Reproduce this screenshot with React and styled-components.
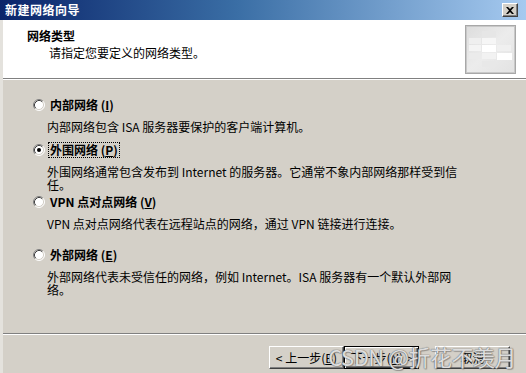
import React from "react";
import styled, { createGlobalStyle } from "styled-components";

const GlobalStyle = createGlobalStyle`
  html, body {
    margin: 0;
    padding: 0;
    background: #d4d0c8;
  }
  body {
    font-family: "Noto Sans CJK SC", "Liberation Sans", sans-serif;
    font-size: 12px;
    color: #000;
  }
`;

const Window = styled.div`
  position: relative;
  width: 526px;
  height: 373px;
  display: flex;
  flex-direction: column;
  overflow: hidden;
  background: #d4d0c8;
`;

const TitleBar = styled.div`
  height: 20px;
  flex-shrink: 0;
  display: flex;
  align-items: center;
  justify-content: space-between;
  padding: 0 8px 0 5px;
  background: linear-gradient(to right, #0a246a 0%, #3a6ea5 45%, #a6caf0 100%);
`;

const Title = styled.span`
  color: #fff;
  font-weight: bold;
  font-size: 12px;
  line-height: 14px;
  letter-spacing: 0.5px;
`;

const CloseButton = styled.div`
  width: 16px;
  height: 14px;
  box-sizing: border-box;
  display: flex;
  align-items: center;
  justify-content: center;
  background: #d4d0c8;
  border-top: 1px solid #fff;
  border-left: 1px solid #fff;
  border-right: 1px solid #404040;
  border-bottom: 1px solid #404040;
  box-shadow: inset -1px -1px 0 #808080;
`;

const Frame = styled.div`
  flex: 1;
  display: flex;
  flex-direction: column;
  border-left: 3px solid #e4e2dd;
`;

const Header = styled.div`
  height: 58px;
  flex-shrink: 0;
  display: flex;
  justify-content: space-between;
  background: #fff;
  padding: 0 10px 0 24px;
  box-sizing: border-box;
`;

const HeaderText = styled.div`
  padding-top: 9px;
`;

const HeaderTitle = styled.div`
  font-weight: bold;
  line-height: 14px;
`;

const HeaderSub = styled.div`
  margin: 3px 0 0 22px;
  line-height: 14px;
`;

const HeaderIcon = styled.div`
  padding-top: 5px;
`;

const Rule = styled.div`
  height: 1px;
  flex-shrink: 0;
  background: #808080;
  border-bottom: 1px solid #fff;
`;

const Body = styled.div`
  flex: 1;
  padding: 18px 0 0 30px;
`;

const Option = styled.div`
  margin-top: ${(p) => p.$gap || 0}px;
`;

const OptionLabel = styled.div`
  display: flex;
  align-items: center;
  gap: 5px;
  height: 14px;
`;

const LabelText = styled.span`
  font-weight: bold;
  line-height: 14px;
  padding: 0 1px;
  margin-left: -1px;
  outline: ${(p) => (p.$focused ? "1px dotted #000" : "none")};
`;

const Description = styled.div`
  margin: 8px 0 0 14px;
  line-height: 13px;
  white-space: nowrap;
`;

const Footer = styled.div`
  flex-shrink: 0;
  height: 38px;
  display: flex;
  justify-content: flex-end;
  align-items: flex-start;
  padding: 11px 16px 0 0;
  box-sizing: border-box;
`;

const Button = styled.div`
  width: 75px;
  height: 23px;
  box-sizing: border-box;
  display: flex;
  align-items: center;
  justify-content: center;
  margin-left: ${(p) => p.$gap || 0}px;
  background: #d4d0c8;
  border-top: 1px solid ${(p) => (p.$default ? "#000" : "#fff")};
  border-left: 1px solid ${(p) => (p.$default ? "#000" : "#fff")};
  border-right: 1px solid ${(p) => (p.$default ? "#000" : "#404040")};
  border-bottom: 1px solid ${(p) => (p.$default ? "#000" : "#404040")};
  box-shadow: ${(p) =>
    p.$default
      ? "inset 1px 1px 0 #fff, inset -1px -1px 0 #404040, inset -2px -2px 0 #808080"
      : "inset -1px -1px 0 #808080"};
  line-height: 14px;
  white-space: nowrap;
`;

const Watermark = styled.div`
  position: absolute;
  right: 10px;
  bottom: 2px;
  font-family: "Noto Sans CJK SC", "Liberation Sans", sans-serif;
  font-size: 22px;
  line-height: 30px;
  letter-spacing: -0.5px;
  color: rgba(255, 255, 255, 0.8);
  text-shadow: 0 0 1px #666, 0 0 1px #666, 1px 1px 1px rgba(80, 80, 80, 0.4);
  pointer-events: none;
  white-space: nowrap;
`;

const Radio = ({ checked }) => (
  <svg width="12" height="12" viewBox="0 0 12 12">
    <circle cx="6" cy="6" r="5" fill="#fff" />
    <path d="M2.11 9.89 A5.5 5.5 0 0 1 9.89 2.11" fill="none" stroke="#808080" />
    <path d="M9.89 2.11 A5.5 5.5 0 0 1 2.11 9.89" fill="none" stroke="#fff" />
    <path d="M2.82 9.18 A4.5 4.5 0 0 1 9.18 2.82" fill="none" stroke="#404040" />
    <path d="M9.18 2.82 A4.5 4.5 0 0 1 2.82 9.18" fill="none" stroke="#d4d0c8" />
    {checked && <circle cx="6" cy="6" r="2" fill="#000" />}
  </svg>
);

const WizardIcon = () => (
  <svg width="51" height="49" viewBox="0 0 51 49">
    <defs>
      <linearGradient id="wg" x1="0" y1="0" x2="1" y2="1">
        <stop offset="0" stopColor="#dcdcdc" />
        <stop offset="0.5" stopColor="#ececec" />
        <stop offset="1" stopColor="#e2e2e2" />
      </linearGradient>
    </defs>
    <rect x="0.5" y="0.5" width="50" height="48" fill="url(#wg)" stroke="#a8a8a8" />
    <rect x="1.5" y="1.5" width="48" height="46" fill="none" stroke="#c8c8c8" />
    <rect x="4" y="13" width="12" height="6" fill="#efefef" />
    <rect x="17" y="6" width="14" height="6" fill="#e6e6e6" />
    <rect x="17" y="13" width="14" height="6" fill="#f6f6f6" />
    <rect x="4" y="20" width="12" height="6" fill="#f4f4f4" />
    <rect x="17" y="20" width="14" height="7" fill="#ffffff" />
    <rect x="32" y="20" width="14" height="6" fill="#f0f0f0" />
    <rect x="4" y="28" width="12" height="6" fill="#ebebeb" />
    <rect x="17" y="28" width="14" height="6" fill="#f2f2f2" />
    <rect x="32" y="28" width="15" height="7" fill="#ffffff" />
    <rect x="17" y="36" width="14" height="6" fill="#e8e8e8" />
  </svg>
);

const options = [
  {
    label: "内部网络",
    key: "I",
    lines: ["内部网络包含 ISA 服务器要保护的客户端计算机。"],
    gap: 0,
  },
  {
    label: "外围网络",
    key: "P",
    checked: true,
    lines: [
      "外围网络通常包含发布到 Internet 的服务器。它通常不象内部网络那样受到信",
      "任。",
    ],
    gap: 10,
  },
  {
    label: "VPN 点对点网络",
    key: "V",
    lines: ["VPN 点对点网络代表在远程站点的网络，通过 VPN 链接进行连接。"],
    gap: 4,
  },
  {
    label: "外部网络",
    key: "E",
    lines: [
      "外部网络代表未受信任的网络，例如 Internet。ISA 服务器有一个默认外部网",
      "络。",
    ],
    gap: 18,
  },
];

export default function App() {
  return (
    <>
      <GlobalStyle />
      <Window>
        <TitleBar>
          <Title>新建网络向导</Title>
          <CloseButton>
            <svg width="8" height="7" viewBox="0 0 8 7">
              <path d="M0 0h2l2 2 2-2h2L5 3.5 8 7H6L4 5 2 7H0l3-3.5z" fill="#000" />
            </svg>
          </CloseButton>
        </TitleBar>
        <Frame>
          <Header>
            <HeaderText>
              <HeaderTitle>网络类型</HeaderTitle>
              <HeaderSub>请指定您要定义的网络类型。</HeaderSub>
            </HeaderText>
            <HeaderIcon>
              <WizardIcon />
            </HeaderIcon>
          </Header>
          <Rule />
          <Body>
            {options.map((o) => (
              <Option key={o.key} $gap={o.gap}>
                <OptionLabel>
                  <Radio checked={o.checked} />
                  <LabelText $focused={o.checked}>
                    {o.label} (<u>{o.key}</u>)
                  </LabelText>
                </OptionLabel>
                <Description>
                  {o.lines.map((l) => (
                    <div key={l}>{l}</div>
                  ))}
                </Description>
              </Option>
            ))}
          </Body>
          <Rule />
          <Footer>
            <Button>
              &lt; 上一步(<u>B</u>)
            </Button>
            <Button $default>
              下一步(<u>N</u>) &gt;
            </Button>
            <Button $gap={16}>取消</Button>
          </Footer>
        </Frame>
        <Watermark>CSDN @折花不羡月</Watermark>
      </Window>
    </>
  );
}
